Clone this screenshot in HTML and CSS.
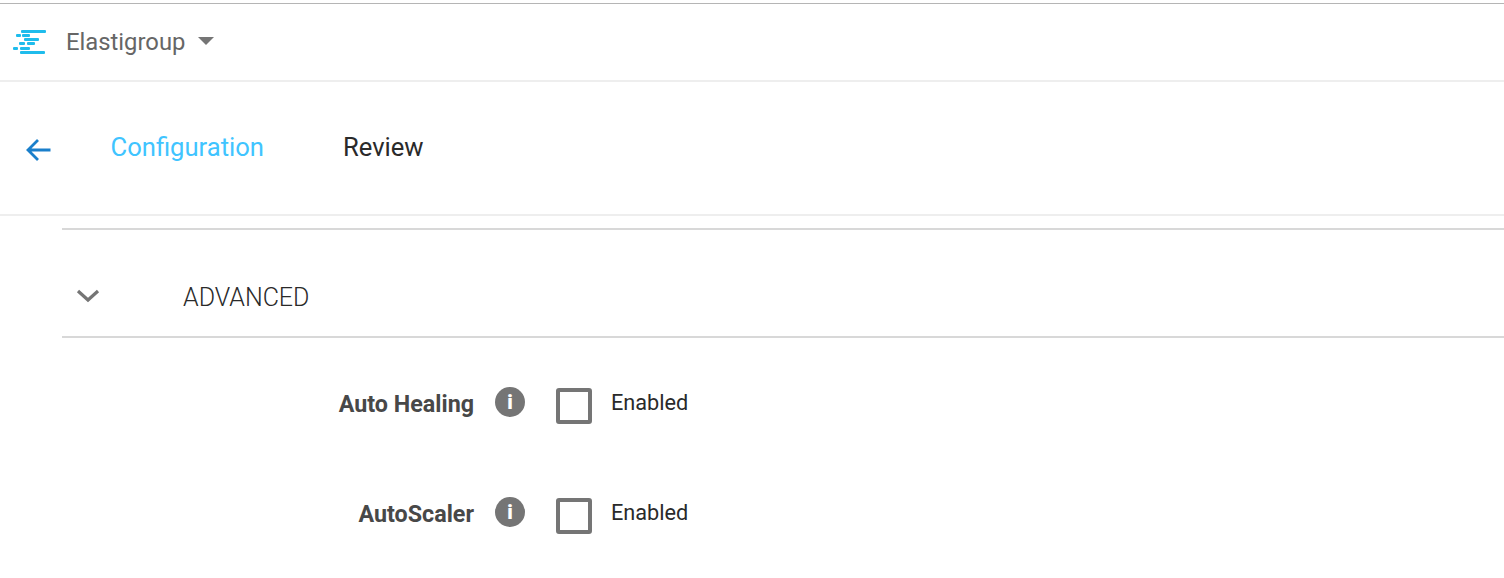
FILE: index.html
```html
<!DOCTYPE html>
<html lang="en">
<head>
  <meta charset="UTF-8">
  <meta name="viewport" content="width=device-width, initial-scale=1.0">
  <title>Elastigroup</title>
  <link rel="stylesheet" href="styles.css">
</head>
<body>
  <header class="topbar">
    <svg class="logo" width="34" height="24" viewBox="0 0 34 24">
      <g fill="#1fbcec">
        <rect x="8" y="0" width="25" height="3" rx="1"/>
        <rect x="3" y="4" width="5" height="3" rx="1"/>
        <rect x="9" y="4" width="8" height="3" rx="1"/>
        <rect x="11" y="8" width="15" height="3" rx="1"/>
        <rect x="6" y="12" width="6" height="3" rx="1"/>
        <rect x="14" y="12" width="8" height="3" rx="1"/>
        <rect x="0" y="17" width="5" height="3" rx="1"/>
        <rect x="7" y="17" width="10" height="3" rx="1"/>
        <rect x="7" y="21" width="25" height="3" rx="1"/>
      </g>
    </svg>
    <span class="product">Elastigroup</span>
    <span class="caret"></span>
  </header>

  <nav class="steps">
    <svg class="back" width="28" height="26" viewBox="0 0 28 26">
      <path d="M25.500 13H3M13 3L3 13L13 23" fill="none" stroke="#1a7fcb" stroke-width="2.800"/>
    </svg>
    <span class="step step-active">Configuration</span>
    <span class="step">Review</span>
  </nav>

  <main class="content">
    <section class="panel-head">
      <svg class="chevron" width="24" height="14" viewBox="0 0 24 14">
        <path d="M2 2L12 11L22 2" fill="none" stroke="#757575" stroke-width="3.200"/>
      </svg>
      <h2 class="panel-title">ADVANCED</h2>
    </section>

    <div class="field field-first">
      <label class="field-label">Auto Healing</label>
      <span class="info">i</span>
      <span class="box"></span>
      <span class="box-text">Enabled</span>
    </div>

    <div class="field">
      <label class="field-label">AutoScaler</label>
      <span class="info">i</span>
      <span class="box"></span>
      <span class="box-text">Enabled</span>
    </div>
  </main>
</body>
</html>
```

FILE: styles.css
```css
html, body {
  height: 100%;
}

body {
  font-family: Roboto, "Liberation Sans", sans-serif;
  margin: 0;
  padding: 0;
  background-color: #fff;
  overflow: hidden;
}

.topbar {
  display: flex;
  align-items: center;
  height: 76px;
  border-top: 1px solid #b5b5b5;
  margin-top: 3px;
  border-bottom: 2px solid #eee;
  padding-left: 13px;
}

.product {
  margin-left: 19px;
  font-size: 23.800px;
  color: #666;
}

.caret {
  margin: 0 0 3px 13px;
  border-left: 8px solid transparent;
  border-right: 8px solid transparent;
  border-top: 8px solid #757575;
}

.steps {
  display: flex;
  align-items: center;
  height: 132px;
  border-bottom: 2px solid #eee;
  padding-left: 25px;
}

.back {
  margin-top: 4px;
}

.step {
  font-size: 25.600px;
  color: #2a2a2a;
  margin-left: 79px;
  margin-bottom: 2px;
}

.step-active {
  color: #40c4ff;
  margin-left: 57.500px;
}

.content {
  margin-top: 12px;
  margin-left: 62px;
}

.panel-head {
  display: flex;
  align-items: center;
  height: 110px;
  border-top: 2px solid #d8d8d8;
  border-bottom: 2px solid #d8d8d8;
  padding: 28px 0 0 14px;
  box-sizing: border-box;
}

.chevron {
  margin-bottom: 3px;
}

.panel-title {
  margin: 0 0 0 83px;
  font-size: 25px;
  font-weight: 300;
  color: #2a2a2a;
}

.field {
  display: flex;
  align-items: center;
  height: 36px;
  margin-top: 74px;
}

.field-first {
  margin-top: 50px;
}

.field-label {
  width: 412px;
  margin-bottom: 4px;
  text-align: right;
  font-size: 23.300px;
  font-weight: 700;
  color: #484848;
}

.info {
  width: 30px;
  height: 30px;
  margin: 0 0 8px 21px;
  border-radius: 50%;
  background-color: #757575;
  color: #fff;
  font-size: 20px;
  font-weight: 900;
  line-height: 30px;
  text-align: center;
}

.box {
  width: 36px;
  height: 36px;
  box-sizing: border-box;
  margin-left: 31px;
  border: 4px solid #757575;
  border-radius: 3px;
}

.box-text {
  margin: 0 0 8px 19px;
  font-size: 21.700px;
  color: #2a2a2a;
}
```
